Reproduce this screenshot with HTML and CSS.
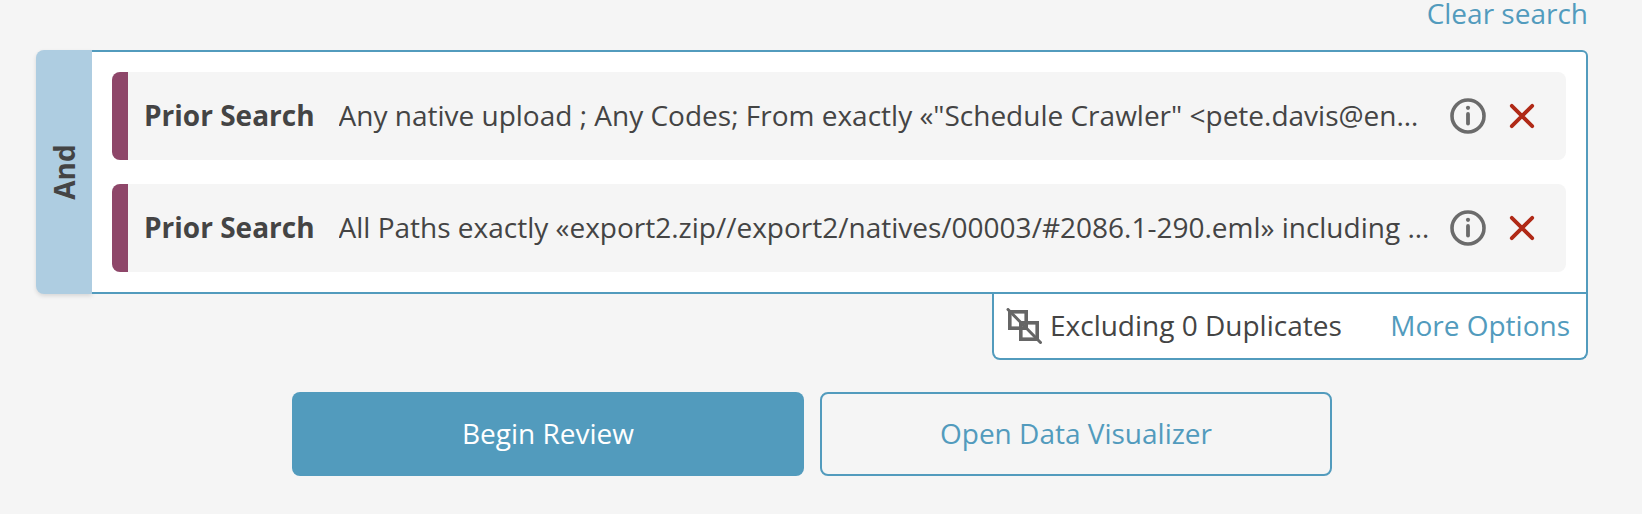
FILE: index.html
```html
<!DOCTYPE html>
<html lang="en">
<head>
<meta charset="utf-8">
<title>Search</title>
<link rel="stylesheet" href="styles.css">
</head>
<body>
<main class="page">
  <div class="clear-row"><a class="link clear">Clear search</a></div>
  <section class="builder">
    <div class="operator"><span class="operator-label">And</span></div>
    <div class="conditions">
      <div class="condition">
        <div class="flag"></div>
        <strong class="cond-name">Prior Search</strong>
        <span class="cond-text cond-text-narrow">Any native upload ; Any Codes; From exactly «"Schedule Crawler" &lt;pete.davis@enron.com&gt;» including all family members and threads</span>
        <svg class="icon info" viewBox="0 0 36 36" aria-hidden="true"><circle cx="18" cy="18" r="16" fill="none" stroke="#6b6b6b" stroke-width="3.6"/><circle cx="18" cy="9.8" r="2.1" fill="#6b6b6b"/><path d="M18 16v9.5" stroke="#6b6b6b" stroke-width="3.8" stroke-linecap="round"/></svg>
        <svg class="icon remove" viewBox="0 0 26 26" aria-hidden="true"><path d="M2.8 2.8l20.4 20.4M23.2 2.8L2.8 23.2" stroke="#b02a17" stroke-width="3.8" stroke-linecap="round"/></svg>
      </div>
      <div class="condition">
        <div class="flag"></div>
        <strong class="cond-name">Prior Search</strong>
        <span class="cond-text">All Paths exactly «export2.zip//export2/natives/00003/#2086.1-290.eml» including all family members and threads</span>
        <svg class="icon info" viewBox="0 0 36 36" aria-hidden="true"><circle cx="18" cy="18" r="16" fill="none" stroke="#6b6b6b" stroke-width="3.6"/><circle cx="18" cy="9.8" r="2.1" fill="#6b6b6b"/><path d="M18 16v9.5" stroke="#6b6b6b" stroke-width="3.8" stroke-linecap="round"/></svg>
        <svg class="icon remove" viewBox="0 0 26 26" aria-hidden="true"><path d="M2.8 2.8l20.4 20.4M23.2 2.8L2.8 23.2" stroke="#b02a17" stroke-width="3.8" stroke-linecap="round"/></svg>
      </div>
    </div>
  </section>
  <div class="options-row">
    <div class="options">
      <svg class="dup" viewBox="0 0 36 36" aria-hidden="true"><g fill="none" stroke="#666" stroke-width="3.6"><rect x="3.8" y="3.8" width="16.4" height="16.4"/><rect x="14.8" y="14.8" width="16.4" height="16.4"/></g><path d="M2 1.5l32.5 33" stroke="#666" stroke-width="3" stroke-linecap="round"/></svg>
      <span class="dup-text">Excluding 0 Duplicates</span>
      <a class="link more">More Options</a>
    </div>
  </div>
  <div class="actions">
    <button class="btn primary">Begin Review</button>
    <button class="btn secondary">Open Data Visualizer</button>
  </div>
</main>
</body>
</html>
```

FILE: styles.css
```css
* { box-sizing: border-box; }
html, body { margin: 0; padding: 0; }
body {
  background: #f5f5f5;
  color: #444;
  font-family: "Open Sans", sans-serif;
  font-size: 28px;
  height: 514px;
  overflow: hidden;
}
.page { width: 1642px; padding: 0 54px 0 36px; }
.link { color: #529bbd; }
.clear-row { display: flex; justify-content: flex-end; height: 50px; line-height: 27px; }
.builder { display: flex; height: 244px; }
.operator {
  width: 56px;
  background: #aecde1;
  border-radius: 8px 0 0 8px;
  box-shadow: 0 2px 4px rgba(0,0,0,.12);
  display: flex;
  align-items: center;
  justify-content: center;
}
.operator-label { transform: rotate(-90deg); font-weight: 700; white-space: nowrap; }
.conditions {
  flex: 1;
  min-width: 0;
  background: #fff;
  border: 2px solid #529bbd;
  border-left: 0;
  border-radius: 0 6px 0 0;
  padding: 20px;
  display: flex;
  flex-direction: column;
  gap: 24px;
}
.condition {
  height: 88px;
  background: #f5f5f5;
  border-radius: 8px;
  display: flex;
  align-items: center;
  overflow: hidden;
}
.flag { width: 16px; align-self: stretch; background: #8e4669; flex: none; }
.cond-name { margin-left: 16px; padding-bottom: 2px; font-weight: 700; white-space: nowrap; flex: none; }
.cond-text {
  margin-left: 24px;
  padding-bottom: 2px;
  flex: 1;
  min-width: 0;
  white-space: nowrap;
  overflow: hidden;
  text-overflow: ellipsis;
}
.cond-text-narrow { margin-right: 1px; }
.icon { flex: none; display: block; }
.info { width: 36px; height: 36px; margin-left: 20px; }
.remove { width: 26px; height: 26px; margin-left: 23px; margin-right: 31px; }
.options-row { display: flex; justify-content: flex-end; }
.options {
  width: 596px;
  height: 66px;
  background: #fff;
  border: 2px solid #529bbd;
  border-top: 0;
  border-radius: 0 0 8px 8px;
  display: flex;
  align-items: center;
  padding: 0 16px 0 12px;
}
.dup { width: 36px; height: 36px; flex: none; }
.dup-text { margin-left: 8px; padding-bottom: 2px; }
.more { margin-left: auto; padding-bottom: 2px; }
.actions { display: flex; gap: 16px; margin: 32px 0 0 256px; }
.btn {
  width: 512px;
  height: 84px;
  border-radius: 8px;
  font: inherit;
  padding: 0 0 2px;
}
.primary { background: #529bbd; border: 0; color: #fff; }
.secondary { background: transparent; border: 2px solid #529bbd; color: #529bbd; }
```
